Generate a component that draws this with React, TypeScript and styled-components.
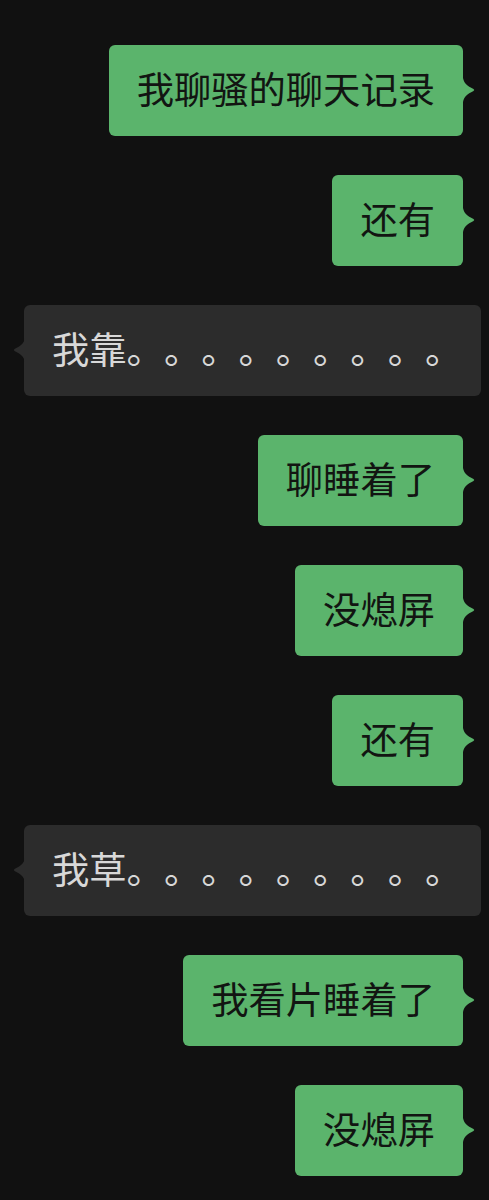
import React from "react";
import styled, { createGlobalStyle } from "styled-components";

const GlobalStyle = createGlobalStyle`
  html, body {
    margin: 0;
    padding: 0;
    background: #111111;
  }
  body {
    font-family: "Noto Sans CJK SC", "Noto Sans", sans-serif;
  }
`;

const Page = styled.div`
  display: flex;
  flex-direction: column;
  gap: 39px;
  padding: 45px 0 40px;
  min-height: 1200px;
  box-sizing: border-box;
  background: #111111;
`;

const Row = styled.div<{ $mine: boolean }>`
  display: flex;
  justify-content: ${(p) => (p.$mine ? "flex-end" : "flex-start")};
  padding: ${(p) => (p.$mine ? "0 26px 0 0" : "0 0 0 24px")};
`;

const Bubble = styled.div<{ $mine: boolean }>`
  position: relative;
  display: flex;
  align-items: center;
  box-sizing: border-box;
  height: 91px;
  max-width: 457px;
  padding: 0 28px 4px;
  border-radius: 6px;
  background: ${(p) => (p.$mine ? "#5bb46c" : "#2c2c2c")};
  color: ${(p) => (p.$mine ? "#121512" : "#d8d8d8")};
  font-size: 37.3px;
  line-height: 1;
  white-space: nowrap;
  text-spacing-trim: space-all;
  font-feature-settings: "halt" 0, "chws" 0;
`;

const Tail = styled.svg<{ $mine: boolean }>`
  position: absolute;
  top: 33px;
  width: 12px;
  height: 24px;
  ${(p) => (p.$mine ? "right: -11.5px;" : "left: -11.5px; transform: scaleX(-1);")}
  fill: ${(p) => (p.$mine ? "#5bb46c" : "#2c2c2c")};
`;

type Msg = { mine: boolean; text: string };

const messages: Msg[] = [
  { mine: true, text: "我聊骚的聊天记录" },
  { mine: true, text: "还有" },
  { mine: false, text: "我靠。。。。。。。。。" },
  { mine: true, text: "聊睡着了" },
  { mine: true, text: "没熄屏" },
  { mine: true, text: "还有" },
  { mine: false, text: "我草。。。。。。。。。" },
  { mine: true, text: "我看片睡着了" },
  { mine: true, text: "没熄屏" },
];

export default function App() {
  return (
    <>
      <GlobalStyle />
      <Page>
        {messages.map((m, i) => (
          <Row key={i} $mine={m.mine}>
            <Bubble $mine={m.mine}>
              {m.text}
              <Tail $mine={m.mine} viewBox="0 0 12 24">
                <path d="M0 0 C1 5 4 8 10.5 11 Q12 12 10.5 13 C4 16 1 19 0 24 Z" />
              </Tail>
            </Bubble>
          </Row>
        ))}
      </Page>
    </>
  );
}
